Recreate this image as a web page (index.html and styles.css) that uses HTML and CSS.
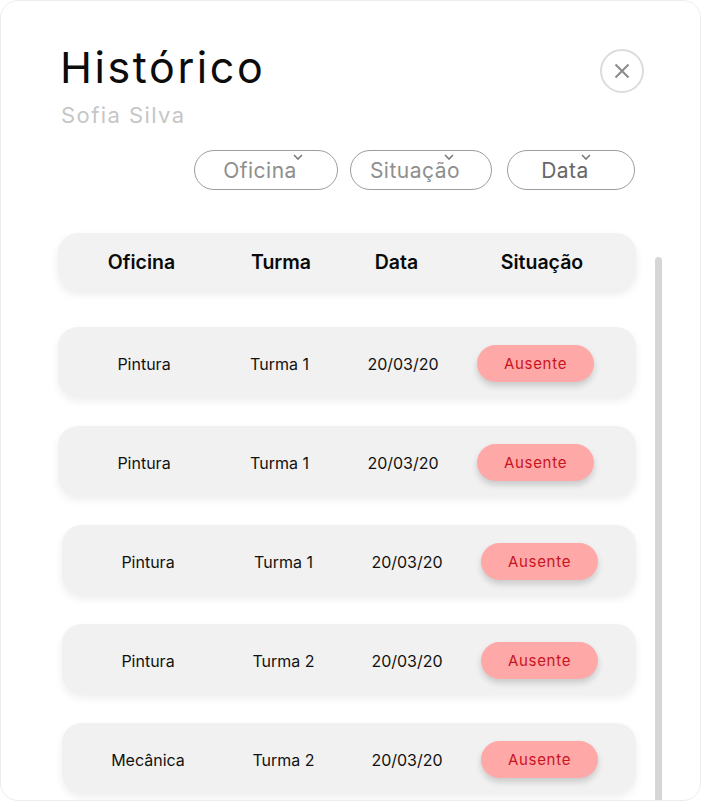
FILE: index.html
```html
<!DOCTYPE html>
<html lang="pt">
<head>
<meta charset="utf-8">
<title>Histórico</title>
<link rel="stylesheet" href="styles.css">
</head>
<body>
<div class="card">
  <header class="top">
    <div class="titles">
      <h1 class="title">Histórico</h1>
      <p class="subtitle">Sofia Silva</p>
    </div>
    <button class="close" aria-label="Fechar">
      <svg width="16" height="16" viewBox="0 0 16 16"><path d="M1.5 1.5 L14.5 14.5 M14.5 1.5 L1.5 14.5" stroke="#8a8a8a" stroke-width="2" fill="none"/></svg>
    </button>
  </header>

  <div class="filters">
    <button class="pill pill-oficina"><span class="pill-text">Oficina</span><svg class="chev" width="10" height="6" viewBox="0 0 10 6"><path d="M1 1 L5 5 L9 1" stroke="#7a7a7a" stroke-width="1.6" fill="none"/></svg></button>
    <button class="pill pill-situacao"><span class="pill-text">Situação</span><svg class="chev" width="10" height="6" viewBox="0 0 10 6"><path d="M1 1 L5 5 L9 1" stroke="#7a7a7a" stroke-width="1.6" fill="none"/></svg></button>
    <button class="pill pill-data"><span class="pill-text dark">Data</span><svg class="chev" width="10" height="6" viewBox="0 0 10 6"><path d="M1 1 L5 5 L9 1" stroke="#7a7a7a" stroke-width="1.6" fill="none"/></svg></button>
  </div>

  <section class="table-area">
    <div class="list">
      <div class="thead">
        <span>Oficina</span><span>Turma</span><span>Data</span><span>Situação</span>
      </div>
      <div class="row">
        <span>Pintura</span><span>Turma 1</span><span>20/03/20</span><span class="badge">Ausente</span>
      </div>
      <div class="row">
        <span>Pintura</span><span>Turma 1</span><span>20/03/20</span><span class="badge">Ausente</span>
      </div>
      <div class="row shifted">
        <span>Pintura</span><span>Turma 1</span><span>20/03/20</span><span class="badge">Ausente</span>
      </div>
      <div class="row shifted">
        <span>Pintura</span><span>Turma 2</span><span>20/03/20</span><span class="badge">Ausente</span>
      </div>
      <div class="row shifted">
        <span>Mecânica</span><span>Turma 2</span><span>20/03/20</span><span class="badge">Ausente</span>
      </div>
    </div>
    <div class="scrollbar"></div>
  </section>
</div>
</body>
</html>
```

FILE: styles.css
```css
* { box-sizing: border-box; }

html, body {
  margin: 0;
  padding: 0;
  background: #ffffff;
}

body {
  font-family: Inter, "Noto Sans", sans-serif;
  color: #111;
}

.card {
  width: 701px;
  height: 801px;
  border: 1px solid #ececec;
  border-radius: 18px;
  background: #fff;
  overflow: hidden;
  padding-left: 57px;
}

.top {
  display: flex;
  justify-content: space-between;
  align-items: flex-start;
  padding-right: 56px;
}

.titles {
  padding-left: 2px;
}

.title {
  margin: 45px 0 0 0;
  font-size: 43px;
  line-height: 43px;
  font-weight: 400;
  letter-spacing: 0.06em;
  color: #0c0c0c;
}

.subtitle {
  margin: 15px 0 0 1px;
  font-size: 22px;
  line-height: 22px;
  letter-spacing: 0.065em;
  color: #c6c6c6;
}

.close {
  margin-top: 48px;
  width: 44px;
  height: 44px;
  border-radius: 50%;
  border: 2px solid #dcdcdc;
  background: #fff;
  display: flex;
  align-items: center;
  justify-content: center;
  padding: 0;
}

.close svg { display: block; }

.filters {
  display: flex;
  justify-content: flex-end;
  padding-right: 65px;
  margin-top: 24px;
}

.pill {
  position: relative;
  height: 40px;
  border: 1px solid #9c9c9c;
  border-radius: 20px;
  background: #fff;
  font-family: Inter, "Noto Sans", sans-serif;
  font-size: 21px;
  letter-spacing: 0.5px;
  color: #8e8e8e;
  display: flex;
  align-items: center;
  justify-content: center;
  padding: 0 12px 0 0;
}

.pill-oficina { width: 144px; }
.pill-situacao { width: 142px; margin-left: 12px; }
.pill-data { width: 128px; margin-left: 15px; }

.pill-text.dark { color: #666; }

.chev {
  position: absolute;
  top: 3px;
}

.pill-oficina .chev { left: 98px; }
.pill-situacao .chev { left: 93px; }
.pill-data .chev { left: 73px; }

.table-area {
  display: flex;
  align-items: flex-start;
  margin-top: 43px;
}

.list {
  width: 578px;
  flex: none;
}

.thead {
  height: 57px;
  border-radius: 20px;
  background: #f2f2f2;
  box-shadow: 0 4px 8px rgba(0, 0, 0, 0.08);
  display: grid;
  grid-template-columns: 167px 112px 119px 172px;
  align-items: center;
  padding-top: 1px;
  font-weight: 600;
  font-size: 19.5px;
  color: #0a0a0a;
}

.thead span { text-align: center; }

.row {
  height: 70px;
  margin-top: 29px;
  padding-top: 3px;
  border-radius: 20px;
  background: #f1f1f1;
  box-shadow: 0 4px 8px rgba(0, 0, 0, 0.07);
  display: grid;
  grid-template-columns: 172px 99px 148px 117px;
  align-items: center;
  font-size: 16px;
  color: #111;
}

.thead + .row { margin-top: 37px; }

.row span { text-align: center; }

.row.shifted { margin-left: 4px; }

.row .badge {
  height: 37px;
  line-height: 37px;
  border-radius: 19px;
  background: #ffa8a8;
  color: #c8141c;
  font-size: 15px;
  letter-spacing: 0.7px;
  box-shadow: 0 4px 6px rgba(0, 0, 0, 0.16);
}

.scrollbar {
  flex: none;
  width: 7px;
  height: 700px;
  margin-left: 19px;
  margin-top: 24px;
  border-radius: 4px 4px 0 0;
  background: #d6d6d6;
}
```
